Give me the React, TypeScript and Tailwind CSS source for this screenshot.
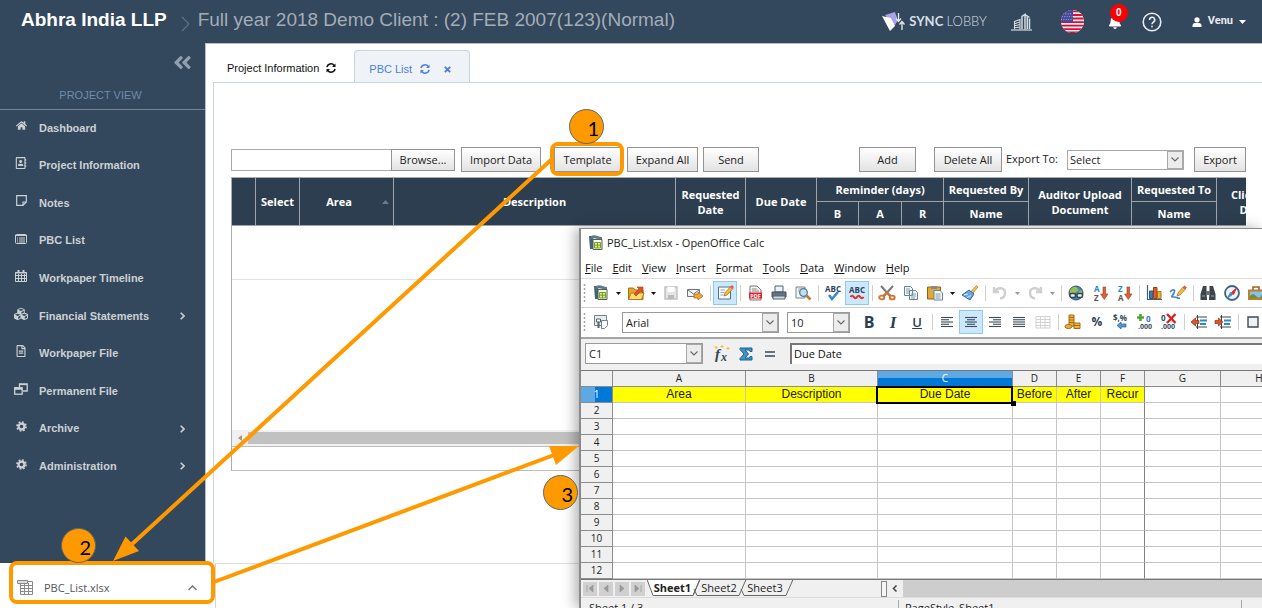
import type { ReactNode } from 'react';
import {
  FaAngleDoubleLeft, FaBell, FaCubes, FaHome, FaRegAddressBook, FaRegFileAlt,
} from 'react-icons/fa';

const ui = "font-['Open_Sans','Noto_Sans',sans-serif]";
const arial = "font-['Liberation_Sans',Arial,sans-serif]";

function Svg({ children, size = 18 }: { children: ReactNode; size?: number }) {
  return <svg width={size} height={size} viewBox="0 0 18 18" fill="none" aria-hidden="true" className="shrink-0">{children}</svg>;
}

/* ---------- Header ---------- */

function SyncLogo() {
  return (
    <svg width="23" height="20" viewBox="0 0 23 20" aria-hidden="true">
      <path d="M3 3 13 0l2.500 8-3.500 6z" fill="#a9a3ea" />
      <path d="M0 4 9 6l4 8-5 5z" fill="#fff" />
      <path d="M9 6 14 3l1.500 6-2.500 4z" fill="#a9a3ea" />
      <path d="M16.500 1v8M14 6.500l2.500 3 2.500-3M20 18v-8M17.500 12.500 20 9.500l2.500 3" stroke="#e5e9ee" strokeWidth="1.300" fill="none" />
    </svg>
  );
}

function Buildings() {
  return (
    <svg width="21" height="18" viewBox="0 0 21 18" fill="none" stroke="#d5dbe1" aria-hidden="true">
      <path d="M0 17h21" strokeWidth="1.200" />
      <path d="M3.500 16V8.500L9 6.500v10M3.500 10.700 9 9M3.500 12.800 9 11.500M3.500 14.800 9 14" strokeWidth="1.100" />
      <path d="M11 16V3.500L14 1.500v15M16.300 16V3.500M18.500 16V5.500M14 1.500l4.500 3" strokeWidth="1.500" />
    </svg>
  );
}

function Flag() {
  return (
    <svg width="23" height="23" viewBox="0 0 24 24" aria-hidden="true">
      <clipPath id="flag"><circle cx="12" cy="12" r="12" /></clipPath>
      <g clipPath="url(#flag)">
        <rect width="24" height="24" fill="#f3f0f2" />
        <path d="M0 1.500h24M0 5.200h24M0 8.900h24M0 12.600h24M0 16.300h24M0 20h24M0 23.500h24" stroke="#d80f35" strokeWidth="1.900" />
        <rect width="12.500" height="12.500" fill="#45489a" />
        <path d="M2 4h10M1 7h11M0 10h12" stroke="#b9bbe0" strokeWidth="1" strokeDasharray="1 1.500" />
      </g>
    </svg>
  );
}

function Header() {
  return (
    <header className={`flex h-[43px] shrink-0 items-center bg-[#33475d] pl-[21px] pr-4 ${arial}`}>
      <h1 className="pb-0.5 text-[19px] font-bold text-white">Abhra India LLP</h1>
      <svg width="9" height="16" viewBox="0 0 9 16" className="ml-3.5 mr-2 mt-1" fill="none" stroke="#5e7186" strokeWidth="1.300" aria-hidden="true"><path d="m1 1 7 7-7 7" /></svg>
      <p className="whitespace-nowrap pb-0.5 text-[19px] text-[#a3adb8]">Full year 2018 Demo Client : (2) FEB 2007(123)(Normal)</p>
      <div className="ml-auto flex items-center">
        <a href="#sync" className="flex items-center gap-1 font-['Lato',sans-serif] text-[13px] text-[#d8dee4]">
          <SyncLogo /><span><b>SYNC</b> <span className="font-light">LOBBY</span></span>
        </a>
        <button aria-label="Company" className="ml-6"><Buildings /></button>
        <button aria-label="Language" className="ml-[29px]"><Flag /></button>
        <button aria-label="Notifications" className="relative ml-6">
          <FaBell size={14} color="#fff" />
          <span className="absolute -top-[11px] left-0.5 flex size-[18px] items-center justify-center rounded-full bg-[#fb0000] text-[10px] font-bold text-white">0</span>
        </button>
        <button aria-label="Help" className="ml-5">
          <svg width="20" height="20" viewBox="0 0 20 20" fill="none" stroke="#e8ecf0" strokeWidth="1.600" aria-hidden="true">
            <circle cx="10" cy="10" r="8.800" /><path d="M7.500 8a2.600 2.600 0 1 1 3.800 2.200c-.9.500-1.300.9-1.300 2M10 13.800v1.500" />
          </svg>
        </button>
        <button className="ml-[30px] flex items-center text-[11px] font-bold text-[#e8ecf0] font-['Roboto',sans-serif]">
          <svg width="10" height="10" viewBox="0 0 10 10" fill="#fff" aria-hidden="true"><circle cx="5" cy="2.800" r="2.600" /><path d="M.5 10V8.500c0-2 2-2.700 4.500-2.700s4.500.7 4.500 2.700V10z" /></svg>
          <span className="ml-1.5">Venu</span>
          <svg width="7" height="4" viewBox="0 0 7 4" className="ml-1.5" fill="#fff" aria-hidden="true"><path d="M0 0h7L3.500 4z" /></svg>
        </button>
      </div>
    </header>
  );
}

/* ---------- Sidebar ---------- */

const cog = (
  <svg width="11" height="11" viewBox="0 0 11 11" fill="none" stroke="currentColor" aria-hidden="true">
    <circle cx="5.500" cy="5.500" r="2.900" strokeWidth="2.200" /><circle cx="5.500" cy="5.500" r="4.500" strokeWidth="1.700" strokeDasharray="1.767 1.767" />
  </svg>
);

const navItems: { label: string; icon: ReactNode; more?: boolean }[] = [
  { label: 'Dashboard', icon: <FaHome size={11} /> },
  { label: 'Project Information', icon: <FaRegAddressBook size={12} /> },
  { label: 'Notes', icon: <svg width="11" height="11" viewBox="0 0 11 11" fill="none" stroke="currentColor" strokeWidth="1.200" aria-hidden="true"><path d="M.7.700h9.600v6.300L7 10.300H.7zM7 10V7h3" /></svg> },
  { label: 'PBC List', icon: <svg width="12" height="10" viewBox="0 0 12 10" fill="none" stroke="currentColor" aria-hidden="true"><rect x=".5" y=".5" width="11" height="9" rx="1" /><path d="M0 1.500h12M2 4h1M4 4h6M2 6h1M4 6h6M2 8h1M4 8h6" /></svg> },
  { label: 'Workpaper Timeline', icon: <svg width="12" height="12" viewBox="0 0 12 12" fill="none" stroke="currentColor" aria-hidden="true"><path d="M.5 2.500h11v9H.5zM0 3h12M0 5.500h12M0 8.500h12M3.500 4v8M6.500 4v8M9.500 4v8" /><path d="M3.500 0v3M8.500 0v3" strokeWidth="2" /></svg> },
  { label: 'Financial Statements', icon: <FaCubes size={14} />, more: true },
  { label: 'Workpaper File', icon: <FaRegFileAlt size={12} /> },
  { label: 'Permanent File', icon: <svg width="14" height="12" viewBox="0 0 14 12" fill="none" stroke="currentColor" strokeWidth="1.300" aria-hidden="true"><path d="M5.500 4V.8h7.700V8H9" /><path d="M5 1.500h8" /><rect x=".7" y="4.700" width="7.500" height="6.500" /><path d="M1 5.800h7" strokeWidth="2" /></svg> },
  { label: 'Archive', icon: cog, more: true },
  { label: 'Administration', icon: cog, more: true },
];

function Sidebar() {
  return (
    <aside className={`w-[205px] shrink-0 bg-[#33475d] ${arial}`}>
      <div className="flex h-[38px] items-center justify-end pr-3 text-[#8fa0b0]">
        <button aria-label="Collapse menu"><FaAngleDoubleLeft size={21} /></button>
      </div>
      <h2 className="h-[29px] border-b border-[#71859b] pr-1 pt-1.5 text-center text-[11px] leading-4 text-[#6f8dac]">PROJECT VIEW</h2>
      <nav className="grid h-[376px] grid-rows-10">
        {navItems.map((n) => (
          <a key={n.label} href="#nav" className="flex items-center pb-0.5 pr-5 text-[11px] font-bold text-[#ccd1d4]">
            <span className="mb-1 ml-3 flex w-[18px] justify-center">{n.icon}</span>
            <span className="ml-[9px] flex-1">{n.label}</span>
            {n.more && <svg width="5" height="8" viewBox="0 0 5 8" fill="none" stroke="currentColor" strokeWidth="1.600" aria-hidden="true"><path d="m.7.700 3.300 3.300L.7 7.300" /></svg>}
          </a>
        ))}
      </nav>
    </aside>
  );
}

/* ---------- Project panel ---------- */

function Refresh() {
  return (
    <svg width="10" height="10" viewBox="0 0 10 10" fill="none" stroke="currentColor" strokeWidth="1.500" aria-hidden="true">
      <path d="M1 4.200A4 4 0 0 1 8.200 2.500M9 5.800A4 4 0 0 1 1.800 7.500" /><path d="M9.500.5v3.500H6zM.5 9.500V6H4z" fill="currentColor" stroke="none" />
    </svg>
  );
}

function Btn({ children, className }: { children: ReactNode; className: string }) {
  return <button className={`h-[25px] whitespace-nowrap border border-[#939393] bg-linear-to-b from-white to-[#e3e3e3] text-[11px] leading-none text-[#222] ${className}`}>{children}</button>;
}

function ChevronBox({ className }: { className: string }) {
  return (
    <span className={`pointer-events-none absolute flex items-center justify-center border border-[#a8a8a8] bg-[#ececec] ${className}`}>
      <svg width="8" height="5" viewBox="0 0 8 5" fill="none" stroke="#666" strokeWidth="1.100" aria-hidden="true"><path d="m.5.5 3.500 3.500L7.500.5" /></svg>
    </span>
  );
}

const th = 'border-r border-b border-[#a0a4a8] p-0 font-bold';

function PbcTable() {
  return (
    <div className="mt-[5px] overflow-hidden border-l border-t border-[#a9adb1]">
      <table className="w-[1088px] table-fixed border-separate border-spacing-0 text-center text-[11px] leading-[15px] text-white">
        <colgroup>
          <col className="w-[24px]" /><col className="w-[44px]" /><col className="w-[94px]" /><col className="w-[282px]" />
          <col className="w-[70px]" /><col className="w-[71px]" /><col className="w-[42px]" /><col className="w-[43px]" />
          <col className="w-[42px]" /><col className="w-[85px]" /><col className="w-[103px]" /><col className="w-[85px]" /><col className="w-[103px]" />
        </colgroup>
        <thead className="bg-[#2d3e50]">
          <tr className="h-[24px]">
            <th rowSpan={2} className={th} />
            <th rowSpan={2} className={th}>Select</th>
            <th rowSpan={2} className={th}>
              <div className="flex items-center pl-[22px] pr-1"><span className="w-[34px]">Area</span><svg width="7" height="4" viewBox="0 0 7 4" className="ml-auto" fill="#6d7a88" aria-hidden="true"><path d="M0 4h7L3.500 0z" /></svg></div>
            </th>
            <th rowSpan={2} className={th}>Description</th>
            <th rowSpan={2} className={th}>Requested Date</th>
            <th rowSpan={2} className={th}>Due Date</th>
            <th colSpan={3} className={th}>Reminder (days)</th>
            <th className={th}>Requested By</th>
            <th rowSpan={2} className={th}>Auditor Upload Document</th>
            <th className={th}>Requested To</th>
            <th rowSpan={2} className={th}>Client Upload Document</th>
          </tr>
          <tr className="h-[24px]">
            {['B', 'A', 'R', 'Name', 'Name'].map((t, i) => <th key={i} className={th}>{t}</th>)}
          </tr>
        </thead>
        <tbody><tr className="h-[54px]"><td colSpan={13} className="border-b border-[#e2e2e2]" /></tr></tbody>
      </table>
      <div className="h-[150px]" />
      <div className="flex h-4 items-center bg-[#f1f1f1]">
        <svg width="4" height="6" viewBox="0 0 4 6" className="mx-1.5" fill="#999" aria-hidden="true"><path d="M4 0v6L0 3z" /></svg>
        <div className="h-3 flex-1 bg-[#c1c1c1]" />
      </div>
      <div className="h-[25px] border-y border-[#bdbdbd]" />
    </div>
  );
}

function Main() {
  return (
    <main className="flex min-w-0 flex-1 flex-col border-l border-t border-[#b5bfca] pl-[7px]">
      <div role="tablist" className={`flex h-[38px] items-end text-[11px] ${arial}`}>
        <button role="tab" className="flex h-8 items-center gap-[7px] pl-3.5 pr-[18px] pt-1 text-[#111]">Project Information <Refresh /></button>
        <button role="tab" aria-selected="true" className="-mb-px flex h-[33px] items-center rounded-t border border-b-0 border-[#c5d3e2] bg-[#eff3f8] pl-3.5 pr-[18px] pt-1 text-[#4c7fd9]">
          PBC List<span className="ml-2"><Refresh /></span>
          <svg width="7" height="7" viewBox="0 0 7 7" className="ml-3.5" stroke="currentColor" strokeWidth="1.900" aria-hidden="true"><path d="m.8.800 5.400 5.400M6.200.800.8 6.200" /></svg>
        </button>
      </div>
      <section className={`flex-1 border-l border-t border-[#ccd5de] pl-[17px] pr-4 pt-16 ${ui}`}>
        <div className="flex items-center">
          <input aria-label="File to import" className="h-[22px] w-[160px] border border-r-0 border-[#a9a9a9] bg-white px-1 text-[11px]" />
          <button className="h-[22px] w-[64px] border border-[#939393] bg-linear-to-b from-white to-[#e3e3e3] text-[11px] leading-none text-[#222]">Browse...</button>
          <Btn className="ml-1.5 w-[80px]">Import Data</Btn>
          <Btn className="ml-[13px] w-[67px]">Template</Btn>
          <Btn className="ml-1.5 w-[71px]">Expand All</Btn>
          <Btn className="ml-[5px] w-[56px]">Send</Btn>
          <Btn className="ml-auto w-[57px]">Add</Btn>
          <Btn className="ml-[18px] w-[68px]">Delete All</Btn>
          <label htmlFor="export" className="ml-1 whitespace-nowrap text-[11px] text-[#222]">Export To:</label>
          <div className="relative ml-[9px] w-[117px]">
            <select id="export" className="block h-5 w-full appearance-none border border-[#a9a9a9] bg-white px-0.5 text-[11px] leading-none text-[#222]"><option>Select</option></select>
            <ChevronBox className="right-px top-px h-[18px] w-4" />
          </div>
          <Btn className="ml-2.5 w-[52px]">Export</Btn>
        </div>
        <PbcTable />
      </section>
    </main>
  );
}

/* ---------- Spreadsheet window ---------- */

const sheetGlyph = (
  <>
    <path d="M2 2h4l1 13H3z" fill="#43627a" /><path d="M4 2c4-2 7 1 11 1v3c-4 0-7-3-11-1z" fill="#60798a" />
    <path d="M6 5.500h9v10H6z" fill="#f4f8ee" stroke="#54614b" /><path d="M7.500 8.500h6v5.500h-6z" fill="#d7ec83" stroke="#7a9f2a" /><path d="M10.500 8.500V14M7.500 11.200h6" stroke="#7a9f2a" />
  </>
);

const abc = (y: number) => <text x="9" y={y} textAnchor="middle" fontSize="8" fontWeight="bold" fontFamily="Open Sans" fill="#2b4558">ABC</text>;
const lines = (rows: [number, number][]) => rows.map(([a, b], i) => <path key={i} d={`M${a} ${4.5 + i * 2.25}H${b}`} stroke="#3e4c57" strokeWidth="1.100" />);
const downArrow = <path d="M12 3h2.600v7H17l-3.700 5.500L9.600 10H12z" fill="#d8613c" stroke="#a03b1c" strokeWidth=".6" />;
const undoPath = <path d="M3 3v5h5M3.500 7.500C7 2.500 14 3.500 14 9c0 3-2 5-5 5.500" stroke="#cfcfcf" strokeWidth="2.400" />;
const sortText = (a: string, b: string, ca: string, cb: string) => (
  <g fontSize="8" fontWeight="bold" fontFamily="Open Sans"><text x="3" y="8" fill={ca}>{a}</text><text x="3" y="16.500" fill={cb}>{b}</text></g>
);
const indentLines = <><path d="M6 4h11M6 14h11M7.500 2v14" stroke="#444" strokeWidth="1" /><path d="M10 7.500h7M10 11h6" stroke="#278ac9" strokeWidth="2" /></>;
const redArrow = <path d="M1 9 5.500 5v2.500H9v3H5.500V13z" fill="#d9532c" stroke="#97300f" strokeWidth=".7" />;

type Tool = { k: 'icon' | 'on' | 'drop' | 'dropoff' | 'sep'; label?: string; art?: ReactNode };
const sep: Tool = { k: 'sep' };
const drop: Tool = { k: 'drop' };
const icon = (label: string, art: ReactNode, k: 'icon' | 'on' = 'icon'): Tool => ({ k, label, art });

const standardTools: Tool[] = [
  icon('New', sheetGlyph), drop,
  icon('Open', <><path d="M1.500 4h5l1.500 2h8v9.500h-14.500z" fill="#e5a528" stroke="#a8700f" /><path d="m4 9h13l-2.500 6.500H1.500z" fill="#ffdc73" stroke="#b47c17" /><path d="m7 10 5-5-2-2h6v6l-2-2-5 5z" fill="#d9532c" stroke="#a63a17" strokeWidth=".6" /></>), drop,
  icon('Save', <><path d="M3 3h12v12H3z" fill="#e4e4e4" stroke="#c2c2c2" strokeWidth="1.500" /><path d="M5.500 3h7v5h-7z" fill="#fff" /><path d="M6 11h6v4H6z" fill="#bbb" /></>),
  icon('E-mail', <><path d="M1.500 5.500h12v7h-12z" fill="#f2f4f5" stroke="#6c7780" /><path d="m2 6 5.500 4L13 6" stroke="#6c7780" /><path d="M8 10h4V8l5 4-5 4v-2H8z" fill="#f0a63b" stroke="#b86f14" strokeWidth=".8" /></>), sep,
  icon('Edit file', <><path d="M2.500 3h12v12h-12z" fill="#fafcfd" stroke="#537388" /><path d="M4.500 6H9M4.500 8.500h4M4.500 11h3" stroke="#8fa2af" /><path d="m8 12 1-3 5.500-6.500 2.500 2L11 11z" fill="#f2c038" stroke="#a8761b" strokeWidth=".8" /><path d="m14 3 2-2 2 2-2 2z" fill="#dc5b54" /></>, 'on'), sep,
  icon('Export as PDF', <><path d="M4 2h7l4 4v10H4z" fill="#f5f5f5" stroke="#777" /><path d="M6 5h5M6 7h7" stroke="#888" /><path d="M3 8.500h13v6H3z" fill="#e3202a" /><text x="9.500" y="13.700" textAnchor="middle" fontSize="5.500" fontWeight="bold" fontFamily="Open Sans" fill="#fff">PDF</text></>),
  icon('Print', <><path d="M5 2h8v6H5z" fill="#edf2f5" stroke="#506471" /><path d="M2 8h14v5H2z" fill="#62747f" stroke="#3f505b" /><path d="M3 12h12v3H3z" fill="#cfd9df" stroke="#506471" /></>),
  icon('Page preview', <><path d="M2 3h9v11H2z" fill="#f2f5f6" stroke="#748691" /><path d="M4 5h5M4 7h3" stroke="#9aabb5" /><circle cx="9.500" cy="8.500" r="3.800" fill="#bce0f5" stroke="#5a788a" strokeWidth="1.300" /><path d="m12.500 11.500 4 4" stroke="#b97c33" strokeWidth="2.500" /></>), sep,
  icon('Spelling', <>{abc(8)}<path d="m5 11 3 4 6-7" stroke="#3a8ac4" strokeWidth="2.600" /></>),
  icon('Auto spellcheck', <>{abc(9)}<path d="M2.500 13q1.700-2.500 3.300 0t3.200 0 3.200 0 3.300 0" stroke="#e0342b" strokeWidth="2.200" /></>, 'on'), sep,
  icon('Cut', <><path d="m3 2 9 10M15 2 6 12" stroke="#747b80" strokeWidth="2" /><path d="m5 12 4-3.500 4 3.500" stroke="#d7702c" strokeWidth="2" /><ellipse cx="3.800" cy="13.500" rx="2.500" ry="1.900" stroke="#d7702c" strokeWidth="1.900" /><ellipse cx="14.200" cy="13.500" rx="2.500" ry="1.900" stroke="#d7702c" strokeWidth="1.900" /></>),
  icon('Copy', <><path d="M2.500 2.500h6l2 2v7h-8zM7.500 6.500h6l2 2v7h-8z" fill="#f4f7f9" stroke="#62849a" /><path d="M4 5h4M4 7h3M4 9h3M9 10h5M9 12h5M9 14h4" stroke="#7d9caf" /></>),
  icon('Paste', <><path d="M1.500 3h13v12h-13z" fill="#e0a83b" stroke="#8f6213" /><path d="M5 2h6v3H5z" fill="#888" /><path d="M8 6.500h6l2.500 2.500v7H8z" fill="#f4f7f9" stroke="#68869a" /><path d="M9.500 10h5M9.500 12h5M9.500 14h5" stroke="#7d9caf" /></>), drop,
  icon('Format paintbrush', <><path d="m15.500 1.500 1.500 1.500-5 6-2-1.500z" fill="#f0c64d" stroke="#a5771c" strokeWidth=".7" /><path d="m8 6 5 4-4 6-8-5z" fill="#69a7e0" stroke="#2f6aa8" /><path d="m3 11 4-1M6 13.500l4-2" stroke="#d9ecfb" /></>), sep,
  icon('Undo', undoPath), { k: 'dropoff' },
  icon('Redo', <g transform="matrix(-1 0 0 1 18 0)">{undoPath}</g>), { k: 'dropoff' }, sep,
  icon('Hyperlink', <><circle cx="9" cy="9" r="7" fill="#4a87b4" stroke="#34536a" /><path d="M3 6q3-4 6-3l3 3-4 3-5 1zM11 8l4-2v5z" fill="#93c04f" /><rect x="3" y="9.500" width="5.500" height="4" rx="1.500" stroke="#314654" strokeWidth="1.500" fill="#eee" /><rect x="10" y="9.500" width="5.500" height="4" rx="1.500" stroke="#314654" strokeWidth="1.500" fill="#eee" /></>),
  icon('Sort ascending', <>{sortText('A', 'Z', '#1687ce', '#555')}{downArrow}</>),
  icon('Sort descending', <>{sortText('Z', 'A', '#1687ce', '#555')}{downArrow}</>), sep,
  icon('Chart', <><path d="M2.500 1v14.500H17" stroke="#4d5e6a" strokeWidth="1.200" /><path d="M4.500 7h3.500v7.500H4.500z" fill="#347fb5" stroke="#215c87" /><path d="M8.500 3.500h3.500v11H8.500z" fill="#de602d" stroke="#9a3a14" /><path d="M12.500 7.500h3.500v7h-3.500z" fill="#efb236" stroke="#a8761b" /></>),
  icon('Draw', <><path d="M1 8c2-3 6-3 4 1s-4 4 0 4 3 2 6 1" stroke="#4589cf" strokeWidth="1.700" /><path d="m8 12 1-3 5-6 2.500 2L11 11z" fill="#f2c038" stroke="#a8761b" strokeWidth=".8" /><path d="m13.500 3.500 2-2L18 3.500l-2 2z" fill="#dc5b54" /></>), sep,
  icon('Find', <><path d="M4 2h3.500v4L8 16H1.500V10zM14 2h-3.500v4l-.5 10h6.500v-6z" fill="#3d4449" /><path d="M7 7h4v4H7z" fill="#687178" /><path d="M3 12h3M12 12h3" stroke="#9aa2a7" /></>),
  icon('Navigator', <><circle cx="9" cy="9" r="7" fill="#f1f4f6" stroke="#3f6684" strokeWidth="1.800" /><path d="m13.500 4-3 6.500-2-2z" fill="#d9332b" stroke="#d9332b" /><path d="m4.500 14 3-5.500 2 2z" fill="#3f8bc6" stroke="#3f8bc6" /></>),
  icon('Gallery', <><path d="M2 6.500h14v8.500H2z" fill="#8ac0ea" stroke="#c17c2d" strokeWidth="2" /><path d="M3 12q3-4 6 0t6-1v3H3z" fill="#5b9938" /><path d="M6 6V3h6v3" stroke="#9b5f1d" strokeWidth="1.500" /></>),
];

const letter = (t: string, cls: string) => <span className={`leading-none text-[#2b3f52] ${cls}`}>{t}</span>;
const zeros = (x: number, y: number) => <text x={x} y={y} fontSize="7" fontWeight="bold" fontFamily="Open Sans" fill="#34495b">.000</text>;

const formatTools: Tool[] = [
  icon('Bold', letter('B', "font-['Open_Sans',sans-serif] text-[16px] font-bold")),
  icon('Italic', letter('I', "font-['Liberation_Serif',serif] text-[17px] italic font-bold")),
  icon('Underline', letter('U', "font-['Open_Sans',sans-serif] underline text-[13px] font-semibold")), sep,
  icon('Align left', lines([[3, 15], [3, 11], [3, 15], [3, 11], [3, 15]])),
  icon('Align center', lines([[3, 15], [5, 13], [3, 15], [5, 13], [3, 15]]), 'on'),
  icon('Align right', lines([[3, 15], [7, 15], [3, 15], [7, 15], [3, 15]])),
  icon('Justify', lines([[3, 15], [3, 15], [3, 15], [3, 15], [3, 15]])),
  icon('Merge cells', <path d="M2 3.500h14v11.500H2zM2 6.500h14M2 9.500h14M2 12.500h14M6.500 3.500v11.500M11 3.500v11.500" stroke="#d2d2d2" />), sep,
  icon('Currency', <><path d="M5 2h5v11H5z" fill="#efb33c" stroke="#a76b17" /><path d="M5 4.500h5M5 7h5M5 9.500h5" stroke="#a76b17" /><ellipse cx="4.500" cy="13.500" rx="3.500" ry="2" fill="#efb33c" stroke="#a76b17" /><path d="M10 10h6v5.500h-6z" fill="#efb33c" stroke="#a76b17" /><path d="M10 12.500h6" stroke="#a76b17" /></>),
  icon('Percent', letter('%', "font-['Open_Sans',sans-serif] font-bold text-[12px]")),
  icon('Standard format', <><text x="1" y="8" fontSize="8" fontWeight="bold" fontFamily="Open Sans" fill="#34495b">$,%</text><path d="m5 12.500 4-3.500v2h5v3H9v2z" fill="#4f9bd3" stroke="#22628f" strokeWidth=".7" /></>),
  icon('Add decimal place', <><path d="M4.500 1v7M1 4.500h7" stroke="#4ea72d" strokeWidth="2.600" /><text x="10" y="9" fontSize="8" fontWeight="bold" fontFamily="Open Sans" fill="#3b6fe0">0</text>{zeros(2, 16)}</>),
  icon('Delete decimal place', <><text x="1" y="8" fontSize="8" fontWeight="bold" fontFamily="Open Sans" fill="#34495b">0</text>{zeros(1, 16)}<path d="m7 1 8.500 9M15.500 1 7 10" stroke="#d8221d" strokeWidth="2.400" /></>), sep,
  icon('Decrease indent', <>{indentLines}{redArrow}</>),
  icon('Increase indent', <>{indentLines}<g transform="matrix(-1 0 0 1 10 0)">{redArrow}</g></>), sep,
  icon('Borders', <path d="M4 4h10v10H4z" fill="#eef2f5" stroke="#3e4c57" strokeWidth="1.400" />),
];

function Tools({ items }: { items: Tool[] }) {
  return items.map((t, i) => {
    if (t.k === 'sep') return <span key={i} className="ml-[3px] mr-0.5 h-4 w-px shrink-0 bg-[#cfcfcf]" />;
    if (t.k === 'drop' || t.k === 'dropoff') {
      return <svg key={i} width="11" height="3" viewBox="0 0 11 3" fill={t.k === 'drop' ? '#111' : '#999'} className="shrink-0" aria-hidden="true"><path d="M3 0h5L5.500 3z" /></svg>;
    }
    const isText = t.label === 'Bold' || t.label === 'Italic' || t.label === 'Underline' || t.label === 'Percent';
    return (
      <button key={i} aria-label={t.label} className={`flex size-6 shrink-0 items-center justify-center ${t.k === 'on' ? 'border border-[#90c8f6] bg-[#cce8ff]' : ''}`}>
        {isText ? t.art : <Svg>{t.art}</Svg>}
      </button>
    );
  });
}

function Grip() {
  return <svg width="8" height="18" viewBox="0 0 8 18" className="shrink-0" aria-hidden="true"><path d="M3.500 0v18" stroke="#a5a5a5" strokeWidth="1.500" strokeDasharray="2 2" /></svg>;
}

function Combo({ id, label, value, className }: { id: string; label: string; value: string; className: string }) {
  return (
    <div className={`relative shrink-0 ${className}`}>
      <select id={id} aria-label={label} className="block h-[21px] w-full appearance-none border border-[#9a9a9a] bg-white px-[3px] text-[11px] leading-none text-[#222]"><option>{value}</option></select>
      <ChevronBox className="right-px top-px h-[19px] w-4" />
    </div>
  );
}

const menus = [['F', 'ile'], ['E', 'dit'], ['V', 'iew'], ['I', 'nsert'], ['F', 'ormat'], ['T', 'ools'], ['D', 'ata'], ['W', 'indow'], ['H', 'elp']];
const columns = ['A', 'B', 'C', 'D', 'E', 'F', 'G', 'H'];
const firstRow = ['Area', 'Description', 'Due Date', 'Before', 'After', 'Recur', '', ''];

function Sheet() {
  const head = 'h-4 p-0 border-b border-r border-[#8c8c8c] font-normal';
  return (
    <table className="w-[717px] table-fixed border-separate border-spacing-0 border-t border-[#777] text-center text-[10px] leading-[15px] text-[#222]">
      <colgroup>
        <col className="w-[32px]" /><col className="w-[133px]" /><col className="w-[132px]" /><col className="w-[135px]" />
        <col className="w-[44px]" /><col className="w-[44px]" /><col className="w-[44px]" /><col className="w-[76px]" /><col className="w-[77px]" />
      </colgroup>
      <thead>
        <tr>
          <th className={`${head} bg-[#f0f0f0]`} />
          {columns.map((c) => (
            <th key={c} scope="col" className={`${head} ${c === 'C' ? 'bg-linear-to-b from-[#5ea9e4] from-45% to-[#0078d7] to-45% text-white' : 'bg-[#f0f0f0]'}`}>{c}</th>
          ))}
        </tr>
      </thead>
      <tbody>
        {Array.from({ length: 12 }, (_, r) => (
          <tr key={r}>
            <th scope="row" className={`${head} ${r === 0 ? 'bg-linear-to-r from-[#5ea9e4] from-45% to-[#0078d7] to-45% text-white' : 'bg-[#f0f0f0]'}`}>{r + 1}</th>
            {columns.map((c, i) => (
              <td
                key={c}
                className={`relative h-4 border-b border-r border-b-[#c6c6c6] p-0 ${c === 'F' ? 'border-r-[#808080]' : 'border-r-[#c6c6c6]'} ${r === 0 && i < 6 ? 'bg-[#ffff00]' : 'bg-white'} text-[12px] ${arial}`}
              >
                {r === 0 ? firstRow[i] : ''}
                {r === 0 && c === 'C' && (
                  <>
                    <span className="pointer-events-none absolute -bottom-0.5 -left-0.5 -right-px -top-px z-10 border-2 border-black" />
                    <span className="absolute -bottom-1 -right-1 z-10 size-[5px] bg-black" />
                  </>
                )}
              </td>
            ))}
          </tr>
        ))}
      </tbody>
    </table>
  );
}

function SheetTabs() {
  return (
    <div className="flex h-[18px] items-center overflow-hidden border-t border-[#777] bg-[#f0f0f0] text-[11px] text-[#222]">
      {['M4 3v7M10 3v7L6 6.500z', 'M9 3v7L5 6.500z', 'M5 3v7l4-3.500z', 'M4 3v7l4-3.500zM10 3v7'].map((d, i) => (
        <button key={i} aria-label={['First sheet', 'Previous sheet', 'Next sheet', 'Last sheet'][i]} className="ml-0.5 size-3.5 shrink-0 bg-[#d0d0d0]">
          <svg width="14" height="14" viewBox="0 0 14 14" fill="#999" stroke="#999" strokeWidth=".7" aria-hidden="true"><path d={d} /></svg>
        </button>
      ))}
      <div className="relative ml-0.5 flex h-full w-[234px] shrink-0 items-center">
        <svg width="150" height="17" viewBox="0 0 150 17" className="absolute left-0 top-0" fill="none" stroke="#666" aria-hidden="true">
          <path d="M0-.5 6 15.500h40L53-.5z" fill="#fff" /><path d="M46 15.500 52.500 0M47 9l3 6.500h42L99-.5M94 9l3 6.500h42L146-.5" />
        </svg>
        <button className="relative ml-1.5 w-[39px] text-[11px] font-bold">Sheet1</button>
        <button className="relative ml-[9px] w-[36px]">Sheet2</button>
        <button className="relative ml-[10px] w-[36px]">Sheet3</button>
      </div>
      <span className="h-4 w-1.5 shrink-0 border border-[#888] bg-[#f6f6f6]" />
      <svg width="6" height="7" viewBox="0 0 6 7" className="mx-[5px] shrink-0" fill="none" stroke="#444" strokeWidth="1.500" aria-hidden="true"><path d="M4.500.5 1.500 3.500l3 3" /></svg>
      <div className="h-full flex-1 bg-[#cdcdcd]" />
    </div>
  );
}

function CalcWindow() {
  return (
    <section className={`absolute bottom-0 left-[579px] right-0 top-[228px] flex flex-col overflow-hidden border-l-2 border-t border-[#8a8a8a] bg-white shadow-[-4px_0_12px_rgba(0,0,0,0.3)] ${ui}`}>
      <div className="flex h-7 shrink-0 items-center gap-0.5 pl-1.5 text-[11px] text-[#222]"><Svg>{sheetGlyph}</Svg>PBC_List.xlsx - OpenOffice Calc</div>
      <nav className="flex h-[21px] shrink-0 items-center gap-2.5 pl-1 pt-0.5 text-[11px] text-[#111]">
        {menus.map(([a, b]) => <button key={a + b}><span className="underline">{a}</span>{b}</button>)}
      </nav>
      <div className="flex h-[29px] shrink-0 items-center overflow-hidden border-t border-[#dcdcdc]">
        <Grip /><Tools items={standardTools} />
      </div>
      <div className="flex h-[30px] shrink-0 items-center overflow-hidden border-t border-[#cfcfcf] pb-px">
        <Grip />
        <button aria-label="Styles" className="flex size-6 shrink-0 items-center justify-center">
          <Svg><path d="M2.500 2.500h12v10h-12z" fill="#e9edef" stroke="#73838e" /><path d="M9.500 7.500h6v5l-3 3h-3z" fill="#fff" stroke="#73838e" /><path d="M4.500 6h4v3h-4z" fill="#fff" stroke="#53636e" /><path d="M6.500 9v6" stroke="#53636e" strokeWidth="2" /></Svg>
        </button>
        <Combo id="font" label="Font name" value="Arial" className="ml-[9px] w-[157px]" />
        <Combo id="size" label="Font size" value="10" className="ml-2 mr-[7px] w-[63px]" />
        <Tools items={formatTools} />
      </div>
      <div className="flex h-[33px] shrink-0 items-center border-t-2 border-[#a5a5a5] bg-[#f0f0f0] pb-0.5">
        <Combo id="cell" label="Name box" value="C1" className="ml-1 w-[118px]" />
        <button aria-label="Function wizard" className="ml-[7px] flex size-6 items-center justify-center">
          <Svg><text x="2" y="14" fontSize="15" fontStyle="italic" fontWeight="bold" fontFamily="Liberation Serif" fill="#2f485b">f</text><text x="8" y="16" fontSize="12" fontStyle="italic" fontWeight="bold" fontFamily="Liberation Serif" fill="#2f485b">x</text><path d="M3 1v3M1.500 2.500h3M9 0v3M7.500 1.500h3M15 2v3M13.500 3.500h3" stroke="#f0be34" /></Svg>
        </button>
        <button aria-label="Sum" className="flex size-6 items-center justify-center"><Svg><path d="M3 3h12v3.500h-2L12.500 5H8l3.500 4L8 13h4.500l.5-1.500h2V15H3v-1.500L7 9 3 4.500z" fill="#3c94cf" stroke="#215f8d" /></Svg></button>
        <button aria-label="Function" className="flex size-6 items-center justify-center"><Svg><path d="M4 7h10M4 11h10" stroke="#34495b" strokeWidth="1.700" /></Svg></button>
        <input aria-label="Input line" defaultValue="Due Date" className="ml-2 h-[21px] min-w-0 flex-1 border-l-2 border-t-2 border-[#777] bg-white pb-0.5 pl-0.5 text-[11px] text-[#111]" />
      </div>
      <div className="shrink-0 overflow-hidden"><Sheet /></div>
      <div className="shrink-0"><SheetTabs /></div>
      <div className="flex h-5 shrink-0 border-t border-[#dcdcdc] bg-[#f0f0f0] pl-2 pt-0.5 text-[11px] leading-4 text-[#222]">
        <span className="w-[310px] border-r border-[#aaa]">Sheet 1 / 3</span>
        <span className="mr-5 flex-1 border-r border-[#aaa] pl-1.5">PageStyle_Sheet1</span>
      </div>
    </section>
  );
}

/* ---------- Download bar and walkthrough marks ---------- */

function DownloadBar() {
  return (
    <footer className="flex h-[45px] shrink-0 bg-white">
      <button className={`flex w-[216px] items-center border-r border-[#d5d5d5] pl-[17px] pr-[18px] pt-1 text-[11px] text-[#555] ${ui}`}>
        <svg width="16" height="17" viewBox="0 0 16 17" fill="none" stroke="#8a8a8a" aria-hidden="true"><path d="M3.500 2.500h12v13h-12zM3.500 6.500h12M3.500 9.500h12M3.500 12.500h12M7.500 4v11.500M11.500 4v11.500" /><path d="M.5 1.500h10v3H.5z" fill="#ddd" /></svg>
        <span className="ml-[11px] mt-0.5 flex-1 text-left">PBC_List.xlsx</span>
        <svg width="9" height="6" viewBox="0 0 9 6" fill="none" stroke="#777" strokeWidth="1.500" aria-hidden="true"><path d="m.5 5 4-4 4 4" /></svg>
      </button>
      <div className="flex-1 border-t border-[#dedede]" />
    </footer>
  );
}

function Step({ n, className }: { n: number; className: string }) {
  return <span className={`absolute flex size-[35px] items-center justify-end rounded-full border border-[#666] bg-[#ff9900] pr-1 pt-0.5 font-['Lato',sans-serif] text-[20px] leading-none text-black ${className}`}>{n}</span>;
}

function Walkthrough() {
  return (
    <div className="pointer-events-none absolute inset-0">
      <svg width="1262" height="608" viewBox="0 0 1262 608" className="absolute left-0 top-0" fill="#ff9900" aria-hidden="true">
        <path d="M552 159 130 546M214 582l340-127" stroke="#ff9900" strokeWidth="4" />
        <path d="m113 561 12.500-24.500L139 551zM579 446h-30l7 19z" />
      </svg>
      <span className="absolute left-[550px] top-[142px] h-[34px] w-[74px] rounded-lg border-4 border-[#ff9900]" />
      <span className="absolute left-[9px] top-[561px] h-[43px] w-[206px] rounded-lg border-4 border-[#ff9900]" />
      <Step n={1} className="left-[569px] top-[109px]" />
      <Step n={2} className="left-[61px] top-[528px]" />
      <Step n={3} className="left-[543px] top-[475px]" />
    </div>
  );
}

export default function App() {
  return (
    <div className="relative flex h-screen min-h-[608px] flex-col overflow-hidden bg-white">
      <Header />
      <div className="flex min-h-0 flex-1"><Sidebar /><Main /></div>
      <DownloadBar />
      <CalcWindow />
      <Walkthrough />
    </div>
  );
}
